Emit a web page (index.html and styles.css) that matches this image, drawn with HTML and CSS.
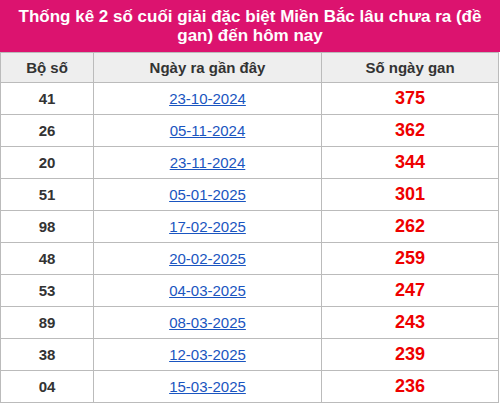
FILE: index.html
```html
<!DOCTYPE html>
<html lang="vi">
<head>
<meta charset="utf-8">
<link rel="stylesheet" href="styles.css">
</head>
<body>
<div class="box">
  <h2 class="title">Thống kê 2 số cuối giải đặc biệt Miền Bắc lâu chưa ra (đề gan) đến hôm nay</h2>
  <table class="gan">
    <thead>
      <tr><th class="c1">Bộ số</th><th class="c2">Ngày ra gần đây</th><th class="c3">Số ngày gan</th></tr>
    </thead>
    <tbody>
      <tr><td class="num">41</td><td><a href="#">23-10-2024</a></td><td class="days">375</td></tr>
      <tr><td class="num">26</td><td><a href="#">05-11-2024</a></td><td class="days">362</td></tr>
      <tr><td class="num">20</td><td><a href="#">23-11-2024</a></td><td class="days">344</td></tr>
      <tr><td class="num">51</td><td><a href="#">05-01-2025</a></td><td class="days">301</td></tr>
      <tr><td class="num">98</td><td><a href="#">17-02-2025</a></td><td class="days">262</td></tr>
      <tr><td class="num">48</td><td><a href="#">20-02-2025</a></td><td class="days">259</td></tr>
      <tr><td class="num">53</td><td><a href="#">04-03-2025</a></td><td class="days">247</td></tr>
      <tr><td class="num">89</td><td><a href="#">08-03-2025</a></td><td class="days">243</td></tr>
      <tr><td class="num">38</td><td><a href="#">12-03-2025</a></td><td class="days">239</td></tr>
      <tr><td class="num">04</td><td><a href="#">15-03-2025</a></td><td class="days">236</td></tr>
    </tbody>
  </table>
</div>
</body>
</html>
```
FILE: styles.css
```css
html, body {
  margin: 0;
  padding: 0;
  background: #fff;
}
body {
  font-family: "Liberation Sans", Arial, sans-serif;
  color: #333;
}
.box {
  width: 499px;
}
.title {
  margin: 0;
  width: 500px;
  height: 52px;
  box-sizing: border-box;
  padding: 7px 8px 6px;
  background: #dc136f;
  color: #fff;
  font-size: 17px;
  font-weight: bold;
  line-height: 19px;
  text-align: center;
}
.gan {
  width: 499px;
  border-collapse: collapse;
  table-layout: fixed;
}
.gan th, .gan td {
  border: 1px solid #bbb;
  text-align: center;
  padding: 0;
}
.gan th {
  background: #eee;
  height: 29px;
  font-size: 15px;
  font-weight: bold;
  color: #333;
}
.gan td {
  height: 31px;
  font-size: 15px;
}
.c1 { width: 92px; }
.c2 { width: 227px; }
.num {
  font-weight: bold;
  color: #333;
}
.gan a {
  color: #1a55c0;
  text-decoration: underline;
}
.gan .days {
  color: #e00;
  font-weight: bold;
  font-size: 18px;
}
```
